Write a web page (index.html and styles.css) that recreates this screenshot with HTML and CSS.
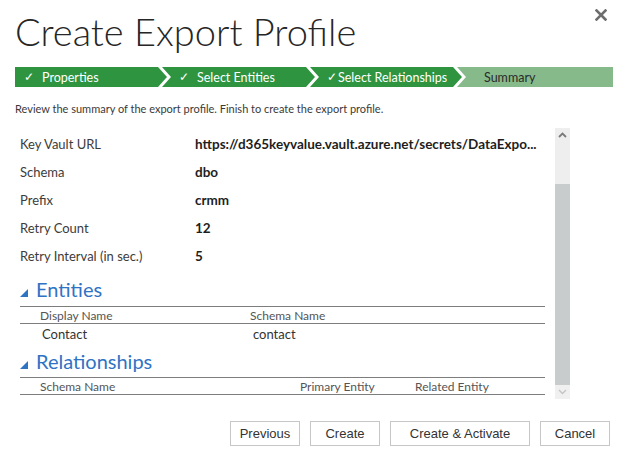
FILE: index.html
```html
<!DOCTYPE html>
<html lang="en">
<head>
<meta charset="utf-8">
<title>Create Export Profile</title>
<link rel="stylesheet" href="styles.css">
</head>
<body>
<div class="dialog">
  <header class="head">
    <h1 class="title">Create Export Profile</h1>
    <button class="close" aria-label="Close">
      <svg width="12" height="12" viewBox="0 0 12 12"><path d="M1.5 1.5 L10.5 10.5 M10.5 1.5 L1.5 10.5" stroke="#6e6e6e" stroke-width="2.6" stroke-linecap="square"/></svg>
    </button>
  </header>

  <nav class="steps">
    <div class="step done first"><span class="chk">✓</span><span class="lbl">Properties</span></div>
    <div class="step done second"><span class="chk">✓</span><span class="lbl">Select Entities</span></div>
    <div class="step done third"><span class="chk tight">✓</span><span class="lbl">Select Relationships</span></div>
    <div class="step current last"><span class="lbl">Summary</span></div>
  </nav>

  <p class="desc">Review the summary of the export profile. Finish to create the export profile.</p>

  <div class="scroller">
    <div class="content">
      <div class="fields">
        <div class="label">Key Vault URL</div><div class="value">https://d365keyvalue.vault.azure.net/secrets/DataExpo...</div>
        <div class="label">Schema</div><div class="value">dbo</div>
        <div class="label">Prefix</div><div class="value">crmm</div>
        <div class="label">Retry Count</div><div class="value">12</div>
        <div class="label">Retry Interval (in sec.)</div><div class="value">5</div>
      </div>

      <section class="group first-group">
        <h2 class="group-title"><span class="tri"></span>Entities</h2>
        <div class="grid ent">
          <div class="gh">Display Name</div><div class="gh">Schema Name</div>
        </div>
        <div class="grid ent rows">
          <div class="gc">Contact</div><div class="gc">contact</div>
        </div>
      </section>

      <section class="group second-group">
        <h2 class="group-title"><span class="tri"></span>Relationships</h2>
        <div class="grid rel">
          <div class="gh">Schema Name</div><div class="gh">Primary Entity</div><div class="gh">Related Entity</div>
        </div>
      </section>
    </div>
    <div class="scrollbar">
      <div class="sb-track top"><svg width="9" height="6" viewBox="0 0 9 6"><path d="M1 5 L4.5 1.5 L8 5" fill="none" stroke="#7a7a7a" stroke-width="1.8"/></svg></div>
      <div class="sb-thumb"></div>
      <div class="sb-track bottom"><svg width="9" height="6" viewBox="0 0 9 6"><path d="M1 1 L4.5 4.5 L8 1" fill="none" stroke="#c4c4c4" stroke-width="1.4"/></svg></div>
    </div>
  </div>

  <footer class="actions">
    <button class="btn w70">Previous</button>
    <button class="btn w70">Create</button>
    <button class="btn w140">Create &amp; Activate</button>
    <button class="btn w70">Cancel</button>
  </footer>
</div>
</body>
</html>
```

FILE: styles.css
```css
* { box-sizing: border-box; }
html, body { margin: 0; padding: 0; background: #fff; }
body {
  font-family: Lato, "Open Sans", sans-serif;
  color: #333;
  width: 626px;
  height: 460px;
  overflow: hidden;
}

.dialog {
  padding: 0 13px 0 15px;
  display: flex;
  flex-direction: column;
}

.head {
  display: flex;
  justify-content: space-between;
  align-items: flex-start;
  height: 67px;
}

.title {
  margin: 11px 0 0 0;
  font-family: Lato, sans-serif;
  font-weight: 300;
  font-size: 38px;
  line-height: 40px;
  color: #262626;
}

.close {
  margin: 9px 6px 0 0;
  padding: 0;
  border: 0;
  background: transparent;
  width: 12px;
  height: 12px;
  display: flex;
}

.steps {
  display: flex;
  height: 20px;
  width: 598px;
}

.step {
  flex: 0 0 auto;
  display: flex;
  align-items: center;
  padding-left: 17px;
  margin-left: -5px;
  font-size: 12.5px;
  color: #fff;
  clip-path: polygon(0 0, calc(100% - 9px) 0, 100% 50%, calc(100% - 9px) 100%, 0 100%, 9px 50%);
}
.step.first {
  width: 152px;
  margin-left: 0;
  padding-left: 9px;
  clip-path: polygon(0 0, calc(100% - 9px) 0, 100% 50%, calc(100% - 9px) 100%, 0 100%);
}
.step.second { width: 153px; }
.step.third { width: 152px; }
.step.last {
  flex: 1 1 auto;
  clip-path: polygon(0 0, 100% 0, 100% 100%, 0 100%, 9px 50%);
  padding-left: 27px;
}
.step.done { background: #2e9440; }
.step.current { background: #87ba8a; color: #2a2a2a; }

.chk {
  display: inline-block;
  width: 18px;
  font-size: 11.5px;
}
.chk.tight { width: 11px; }

.desc {
  margin: 15px 0 0 0;
  font-size: 11px;
  line-height: 14px;
  color: #3a3a3a;
}

.scroller {
  margin-top: 12px;
  height: 271px;
  display: flex;
  width: 555px;
  overflow: hidden;
}

.content {
  flex: 1;
  padding: 2px 10px 0 5px;
  overflow: hidden;
}

.fields {
  display: grid;
  grid-template-columns: 175px 1fr;
  grid-auto-rows: 28px;
  align-items: center;
}
.label { font-size: 13px; color: #3c3c3c; }
.value {
  font-size: 13.5px;
  font-weight: 700;
  color: #1e1e1e;
  white-space: nowrap;
  overflow: hidden;
}

.group.first-group { margin-top: 0; }
.group-title {
  margin: 0;
  display: flex;
  align-items: center;
  height: 36px;
  padding: 5px 0 3px 0;
  font-weight: 400;
  font-size: 20px;
  line-height: 28px;
  color: #2f73c4;
}
.second-group .group-title {
  height: 34px;
  padding: 4px 0 2px 0;
}
.tri {
  width: 0;
  height: 0;
  border-left: 8px solid transparent;
  border-bottom: 8px solid #2f73c4;
  margin: 8px 8px 0 0;
}

.grid {
  display: grid;
  border-top: 1px solid #7d7d7d;
  border-bottom: 1px solid #7d7d7d;
  height: 18px;
  align-items: center;
  font-size: 12px;
  color: #555;
}
.grid.rows {
  border: 0;
  height: 19px;
  font-size: 13px;
  color: #333;
}
.grid.ent { grid-template-columns: 210px 1fr; padding-left: 20px; }
.grid.ent.rows { padding-left: 22px; grid-template-columns: 211px 1fr; }
.grid.rel { grid-template-columns: 260px 115px 1fr; padding-left: 20px; }

.scrollbar {
  width: 15px;
  display: flex;
  flex-direction: column;
  background: #ececec;
}
.sb-track {
  display: flex;
  justify-content: center;
  background: #eeeeee;
}
.sb-track.top { height: 56px; padding-top: 4px; }
.sb-thumb { flex: 1; background: #c9cccc; }
.sb-track.bottom { height: 14px; align-items: center; background: #f0f0f0; }

.actions {
  margin-top: 22px;
  display: flex;
  justify-content: flex-end;
  gap: 10px;
  padding-right: 3px;
}
.btn {
  height: 25px;
  border: 1px solid #c6c6c6;
  background: #fff;
  font-family: "Liberation Sans", Arial, sans-serif;
  font-size: 13px;
  color: #333;
  padding: 0;
}
.w70 { width: 70px; }
.w140 { width: 140px; }
```
